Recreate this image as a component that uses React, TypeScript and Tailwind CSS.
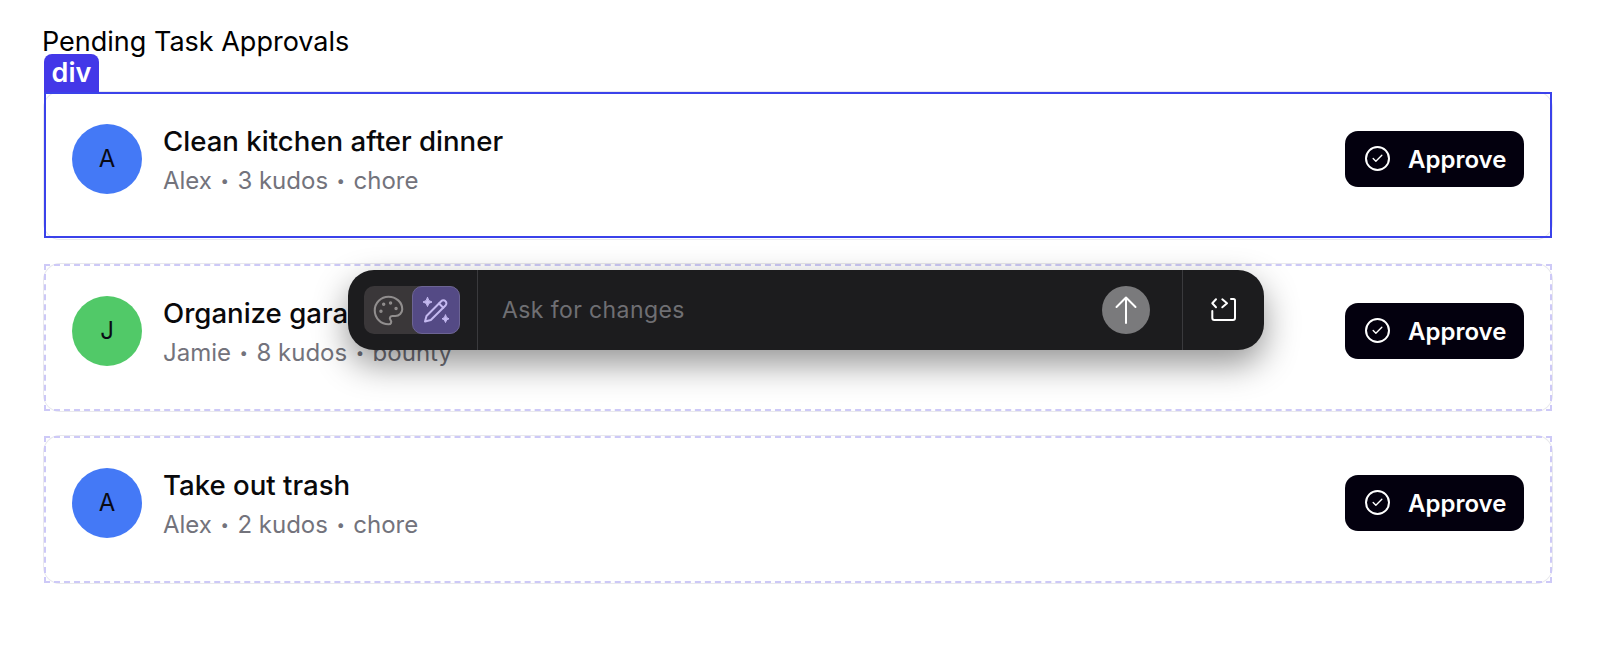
import { Check, Palette } from "lucide-react";

const tasks = [
  { letter: "A", color: "bg-[#4479f6]", title: "Clean kitchen after dinner", who: "Alex", kudos: "3 kudos", kind: "chore", selected: true },
  { letter: "J", color: "bg-[#51c968]", title: "Organize garage", who: "Jamie", kudos: "8 kudos", kind: "bounty", selected: false },
  { letter: "A", color: "bg-[#4479f6]", title: "Take out trash", who: "Alex", kudos: "2 kudos", kind: "chore", selected: false },
];

function CheckCircle() {
  return (
    <span className="flex h-[25px] w-[25px] items-center justify-center rounded-full border-[2px] border-white">
      <Check size={13} strokeWidth={2.5} className="text-white" />
    </span>
  );
}

function Card({ t }: { t: (typeof tasks)[number] }) {
  return (
    <div className="relative flex h-[147px] items-start justify-between rounded-2xl border border-transparent pl-[27px] pr-[27px] pt-[31px] ring-1 ring-[#e9e9ed]">
      {t.selected ? (
        <>
          <span className="absolute -inset-x-px -top-px bottom-0 border-[2px] border-[#3b42ea]" />
          <span className="absolute left-[-1px] top-[-39px] flex h-[38px] w-[55px] items-center justify-center rounded-t-lg bg-[#4338e8] pb-[2px] text-[27px] font-semibold leading-none text-white">
            div
          </span>
        </>
      ) : (
        <span className="absolute -inset-px border-[2px] border-dashed border-[#cdc9f7]" />
      )}
      <div className="flex items-start gap-[21px]">
        <div className={`flex h-[70px] w-[70px] items-center justify-center rounded-full text-[24px] text-[#0a0a14] ${t.color}`}>
          {t.letter}
        </div>
        <div>
          <div className="mt-[-1px] text-[27.6px] font-medium leading-[36px] text-[#09090b]">{t.title}</div>
          <div className="mt-[4px] flex items-center text-[24px] leading-[36px] text-[#73737c]">
            <span>{t.who}</span>
            <span className="mx-[8.5px] text-[15px]">•</span>
            <span>{t.kudos}</span>
            <span className="mx-[8.5px] text-[15px]">•</span>
            <span>{t.kind}</span>
          </div>
        </div>
      </div>
      <button className="mt-[7px] flex h-[56px] w-[179px] items-center gap-[18px] rounded-[13px] bg-[#03000e] pb-[1px] pl-[20px] text-[24px] font-semibold text-white">
        <CheckCircle />
        <span className="mt-[2px]">Approve</span>
      </button>
    </div>
  );
}

export default function App() {
  return (
    <div className="relative h-[666px] w-[1620px] overflow-hidden bg-white pl-[44px] pr-[68px] pt-[25px] font-['Inter',sans-serif]">
      <h1 className="ml-[-2px] text-[27px] font-normal leading-[34px] text-black">Pending Task Approvals</h1>
      <div className="mt-[33px] flex flex-col gap-[25px]">
        {tasks.map((t) => (
          <Card key={t.title + t.who} t={t} />
        ))}
      </div>

      <div className="absolute left-[348px] top-[270px] flex h-[80px] w-[916px] items-center rounded-[26px] bg-[#1c1c1e] shadow-[0_14px_34px_rgba(0,0,0,0.42)]">
        <div className="ml-[16px] flex h-[48px] w-[96px] rounded-[10px] bg-[#3a3739]">
          <div className="flex h-[48px] w-[48px] items-center justify-center text-[#918e8e]">
            <Palette size={33} strokeWidth={1.5} />
          </div>
          <div className="flex h-[48px] w-[48px] items-center justify-center rounded-[10px] border border-[#6c6494] bg-[#544a85] text-[#c4b9f0]">
            <svg width="28" height="28" viewBox="0 0 28 28" fill="none" stroke="currentColor" strokeWidth="2" strokeLinecap="round" strokeLinejoin="round">
              <path d="M3 25.5 L4.5 20 L19.2 5.2 a3 3 0 0 1 4.3 0 a3 3 0 0 1 0 4.3 L8.8 24 Z" />
              <path d="M17 7.5 L21.3 11.8" />
              <path d="M5.5 1.5 Q6 5.5 10 6 Q6 6.5 5.5 10.5 Q5 6.5 1 6 Q5 5.5 5.5 1.5 Z" fill="currentColor" strokeWidth="1" />
              <path d="M23.5 19 Q24 22.2 27 22.8 Q24 23.3 23.5 26.5 Q23 23.3 20 22.8 Q23 22.2 23.5 19 Z" fill="currentColor" strokeWidth="1" />
            </svg>
          </div>
        </div>
        <div className="ml-[17px] h-[80px] w-px bg-[#3a3a3d]" />
        <div className="ml-[24px] flex-1 text-[23px] tracking-[0.4px] text-[#6f6f73]">Ask for changes</div>
        <div className="flex h-[48px] w-[48px] items-center justify-center rounded-full bg-[#7a7a7c] text-white">
          <svg width="24" height="30" viewBox="0 0 24 30" fill="none" stroke="currentColor" strokeWidth="2" strokeLinecap="round" strokeLinejoin="round">
            <path d="M12 2.5 V28 M2.5 12 L12 2.5 L21.5 12" />
          </svg>
        </div>
        <div className="ml-[32px] h-[80px] w-px bg-[#3a3a3d]" />
        <div className="ml-[22px] mr-[19px] flex w-[40px] items-center justify-center text-white">
          <svg width="40" height="40" viewBox="0 0 40 40" fill="none" stroke="currentColor" strokeWidth="2" strokeLinecap="round" strokeLinejoin="round">
            <path d="M11 9.3 L7.3 13.3 L11 17.3" />
            <path d="M17.3 9.3 L22 13.3 L17.3 17.3" />
            <path d="M26 9 H28.5 a1.5 1.5 0 0 1 1.5 1.5 V28 a2 2 0 0 1 -2 2 H9.3 a2 2 0 0 1 -2 -2 V21" />
          </svg>
        </div>
      </div>
    </div>
  );
}
